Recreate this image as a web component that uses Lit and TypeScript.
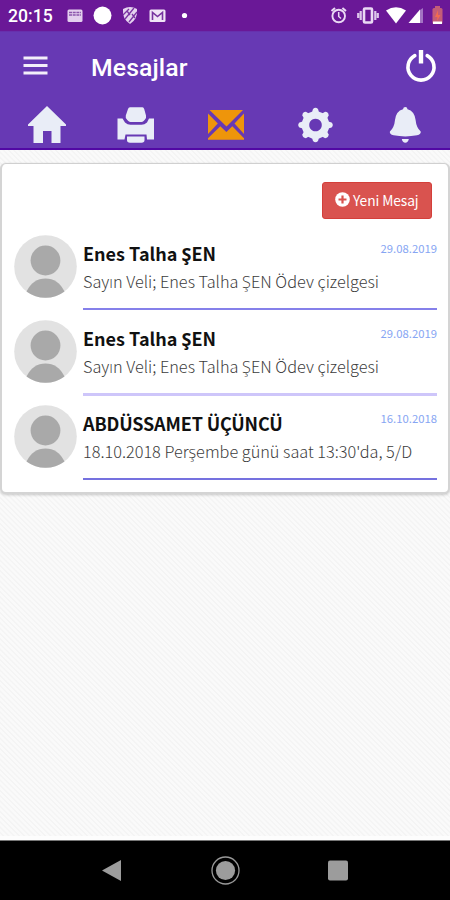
import { LitElement, html, css, svg } from "lit";
import { customElement } from "lit/decorators.js";

const messages = [
  { name: "Enes Talha ŞEN", text: "Sayın Veli; Enes Talha ŞEN Ödev çizelgesi", date: "29.08.2019", cls: "a" },
  { name: "Enes Talha ŞEN", text: "Sayın Veli; Enes Talha ŞEN Ödev çizelgesi", date: "29.08.2019", cls: "b" },
  { name: "ABDÜSSAMET ÜÇÜNCÜ", text: "18.10.2018 Perşembe günü saat 13:30'da, 5/D", date: "16.10.2018", cls: "c" },
];

const teeth = [0, 45, 90, 135, 180, 225, 270, 315];

const navIcons = [
  svg`<path d="M47 6L66 24.6V26H60.5V43H51.5V31H43V43H33.5V26H28V24.6Z"/>`,
  svg`<path d="M40 7.3H52.5Q53.7 7.3 54.2 9L56 15.5V18Q53.5 22 51.5 22H40.5Q38.5 22 35.8 18V15.5L38 9Q38.500 7.300 40 7.300Z"/><path d="M27.500 18.500H32.500L35 22.500Q37.500 24.800 40.500 24.800H51.500Q54.500 24.800 57 22.500L59 18.500H64V39.500H57L56.500 34.500H35.500L34.500 39.500H27.500Z"/><path d="M37 36.600H54.500V40Q54.500 42.700 51.500 42.700H40Q37 42.700 37 40Z"/>`,
  svg`<g fill="#ee950b"><path d="M29.500 10H63L46.500 26.500Z"/><path d="M28 13.500L37.800 23.500L28 34Z"/><path d="M64 13.500L54.500 23.500L64 34Z"/><path d="M40.300 26.200L46.400 32L52.300 26.200L64 38.300V39.700H28V38.300Z"/></g>`,
  svg`<path fill-rule="evenodd" d="M45.500 11.200a13.800 13.800 0 1 0 .01 0ZM45.500 18.700a6.300 6.300 0 1 1-.01 0Z"/>${teeth.map(
    (a) => svg`<path transform="rotate(${a} 45.5 25)" d="M41.800 13L43 8.900Q45.500 6.500 48 8.900L49.200 13Z"/>`
  )}`,
  svg`<path d="M45.3 7Q47.3 7 47.5 9.2Q54.5 11 55.6 20Q56.3 27.5 60.7 31.5Q61.3 34.3 57 35.3Q45.3 37.6 33.6 35.3Q29.2 34.3 29.9 31.5Q34.3 27.5 35 20Q36 11 43 9.2Q43.3 7 45.3 7Z"/><path d="M41.8 39H48.8Q48 42.8 45.3 42.8Q42.6 42.8 41.8 39Z"/>`,
];

@customElement("app-root")
export class AppRoot extends LitElement {
  static styles = css`
    :host {
      display: flex;
      flex-direction: column;
      width: 450px;
      height: 900px;
      overflow: hidden;
      font-family: "Noto Sans CJK SC", "Open Sans", sans-serif;
      background: #fff;
    }
    * { box-sizing: border-box; }
    svg { display: block; flex: none; }
    .status {
      height: 31px;
      flex: none;
      display: flex;
      align-items: center;
      background: #6a1897;
      padding-left: 8px;
      color: #fff;
      font: 500 17.6px/31px Roboto, sans-serif;
    }
    .clock { width: 52px; white-space: nowrap; padding-top: 1px; }
    .header {
      height: 119px;
      flex: none;
      background: #6739b4;
      border-top: 1px solid #6730ad;
      border-bottom: 2px solid #5208a4;
    }
    .bar { display: flex; height: 68px; align-items: center; padding: 0 12px 0 23px; }
    .bar svg { margin-bottom: 1px; }
    .title {
      flex: 1;
      margin-left: 43px;
      padding-top: 3px;
      color: #fff;
      font: 500 24.8px/30px Roboto, sans-serif;
      letter-spacing: 0.1px;
    }
    .nav { display: flex; fill: #e9edf7; }
    .body {
      flex: 1;
      padding-top: 13px;
      background: repeating-linear-gradient(45deg, #fafafa 0 1.6px, #f4f4f4 2.2px 3px, #fafafa 3.7px);
      border-bottom: 4px solid #fdfdfd;
    }
    .card {
      height: 331px;
      background: #fff;
      border: 2px solid #d4d4d4;
      border-top: 1px solid #d0d0d0;
      border-radius: 6px;
      box-shadow: 0 1px 3px rgba(0, 0, 0, 0.2);
      padding: 18px 11px 0 12px;
    }
    .new {
      display: flex;
      align-items: center;
      width: 110px;
      height: 37px;
      margin: 0 5px 0 auto;
      padding: 0 0 2px 12px;
      gap: 3px;
      border: 1px solid #d43f3a;
      border-radius: 3px;
      background: #d9534f;
      color: #fff;
      font-family: inherit;
      font-size: 13.8px;
      white-space: nowrap;
    }
    .newtext { letter-spacing: -0.1px; }
    .row { display: flex; height: 85px; padding-top: 16px; gap: 6px; }
    .main { flex: 1; min-width: 0; height: 75px; border-bottom: 2px solid #8580ea; }
    .b .main { border-bottom: 3px solid #cec6fa; height: 76px; }
    .c .main { border-bottom-color: #7571df; }
    .top { display: flex; justify-content: space-between; }
    .name { font-weight: 700; font-size: 18px; line-height: 26px; padding-top: 5px; color: #111; white-space: nowrap; }
    .c .name { letter-spacing: -0.15px; }
    .date { font-size: 11.3px; line-height: 16px; padding-top: 5px; color: #86a5f3; }
    .text { font-size: 16.3px; line-height: 24px; padding-top: 3px; color: #3c3c3c; font-weight: 300; white-space: nowrap; }
    .system { height: 60px; flex: none; background: #000; border-top: 1px solid #777; }
  `;

  render() {
    return html`
      <div class="status">
        <span class="clock">20:15</span>
        <svg width="390" height="31" viewBox="60 0 390 31" fill="#fff">
          <rect x="67.5" y="9.5" width="15" height="12.5" rx="1.5" fill="#e3cfee" />
          <path d="M69 12.500H81M69 15H81" stroke="#8b55ac" stroke-width="1.4" stroke-dasharray="3 .7" />
          <circle cx="102.500" cy="15.500" r="9" />
          <path d="M123 9Q130 5 137 9Q138 19 130 24Q122 19 123 9Z" fill="#e5d3ef" />
          <path d="M123 15L129 9M125 19L134 8M129 22L137 12M127 11L130 15M132 14L135 18" stroke="#7a34a2" stroke-width="1.3" />
          <rect x="149.500" y="9.500" width="16" height="12.500" rx="1.500" fill="#f0e4f6" />
          <path d="M152.500 20V12.500L157.500 16.500L162.500 12.500V20" fill="none" stroke="#77349f" stroke-width="1.600" />
          <circle cx="184.500" cy="15.500" r="2.600" />
          <g fill="none" stroke="#ead9f4">
            <circle cx="338.700" cy="16" r="6.300" stroke-width="1.900" />
            <path d="M338.700 12V16.500L341 18.500" stroke-width="1.500" />
            <path d="M331.500 11L335 8M342.400 8L346 11" stroke-width="2" />
          </g>
          <rect x="364" y="8.500" width="8" height="14" rx="1" fill="none" stroke="#ead9f4" stroke-width="2.600" />
          <path d="M358.200 13V18M377.800 13V18M360.700 11V20M375.300 11V20" stroke="#ddc6eb" stroke-width="2.200" />
          <path d="M386 10.500Q396 4 406 10.500L396 23.500Z" />
          <path d="M408.500 23L420 9.500V23Z" />
          <path d="M420 10L423 8V23H420Z" fill="#a373c3" />
          <rect x="432.500" y="8" width="10" height="16" rx="1.500" fill="#c35c78" />
          <rect x="435" y="6" width="5" height="3" fill="#c35c78" />
          <path d="M438 10L435 17H437.500L437 21L440.500 15H438Z" fill="#f26b50" />
          <rect x="433" y="21.500" width="9" height="2.500" fill="#fff" />
        </svg>
      </div>
      <div class="header">
        <div class="bar">
          <svg width="25" height="20" viewBox="0 0 25 20" stroke="#f3effa" stroke-width="2.800">
            <path d="M0.500 2H24.500M0.500 9.500H24.500M0.500 17H24.500" />
          </svg>
          <div class="title">Mesajlar</div>
          <svg width="34" height="34" viewBox="0 0 34 34" fill="none" stroke="#fff">
            <path d="M10.800 6.700A13 13 0 1 0 23.200 6.700" stroke-width="3.600" stroke-linecap="round" />
            <path d="M17 1V14.500" stroke-width="4.400" />
          </svg>
        </div>
        <div class="nav">
          ${navIcons.map((icon) => html`<svg width="90" height="46" viewBox="0 0 90 46">${icon}</svg>`)}
        </div>
      </div>
      <div class="body">
        <div class="card">
          <button class="new">
            <svg width="15" height="15" viewBox="0 0 15 15">
              <circle cx="7.500" cy="7.500" r="7.300" fill="#fff" />
              <path d="M7.500 3.500V11.500M3.500 7.500H11.500" stroke="#d9534f" stroke-width="2.200" />
            </svg>
            <span class="newtext">Yeni Mesaj</span>
          </button>
          ${messages.map(
            (m) => html`<div class="row ${m.cls}">
              <svg width="63" height="63" viewBox="0 0 63 63">
                <circle cx="31.500" cy="31.500" r="31.300" fill="#e2e2e2" />
                <circle cx="31.500" cy="25.500" r="14.900" fill="#a9a9a9" />
                <path d="M12.500 56.500Q19 43.500 31.500 43.500Q44 43.500 50.500 56.500Q42 62.800 31.500 62.800Q21 62.800 12.500 56.500Z" fill="#a9a9a9" />
              </svg>
              <div class="main">
                <div class="top"><span class="name">${m.name}</span><span class="date">${m.date}</span></div>
                <div class="text">${m.text}</div>
              </div>
            </div>`
          )}
        </div>
      </div>
      <div class="system">
        <svg width="450" height="59" viewBox="0 841 450 59" fill="#9c9c9c">
          <path d="M102 870.500L121 860V881Z" />
          <circle cx="225.500" cy="870.500" r="9.600" />
          <circle cx="225.500" cy="870.500" r="13.500" fill="none" stroke="#999" stroke-width="1.300" />
          <rect x="328" y="860.500" width="20" height="20" rx="2" />
        </svg>
      </div>
    `;
  }
}
